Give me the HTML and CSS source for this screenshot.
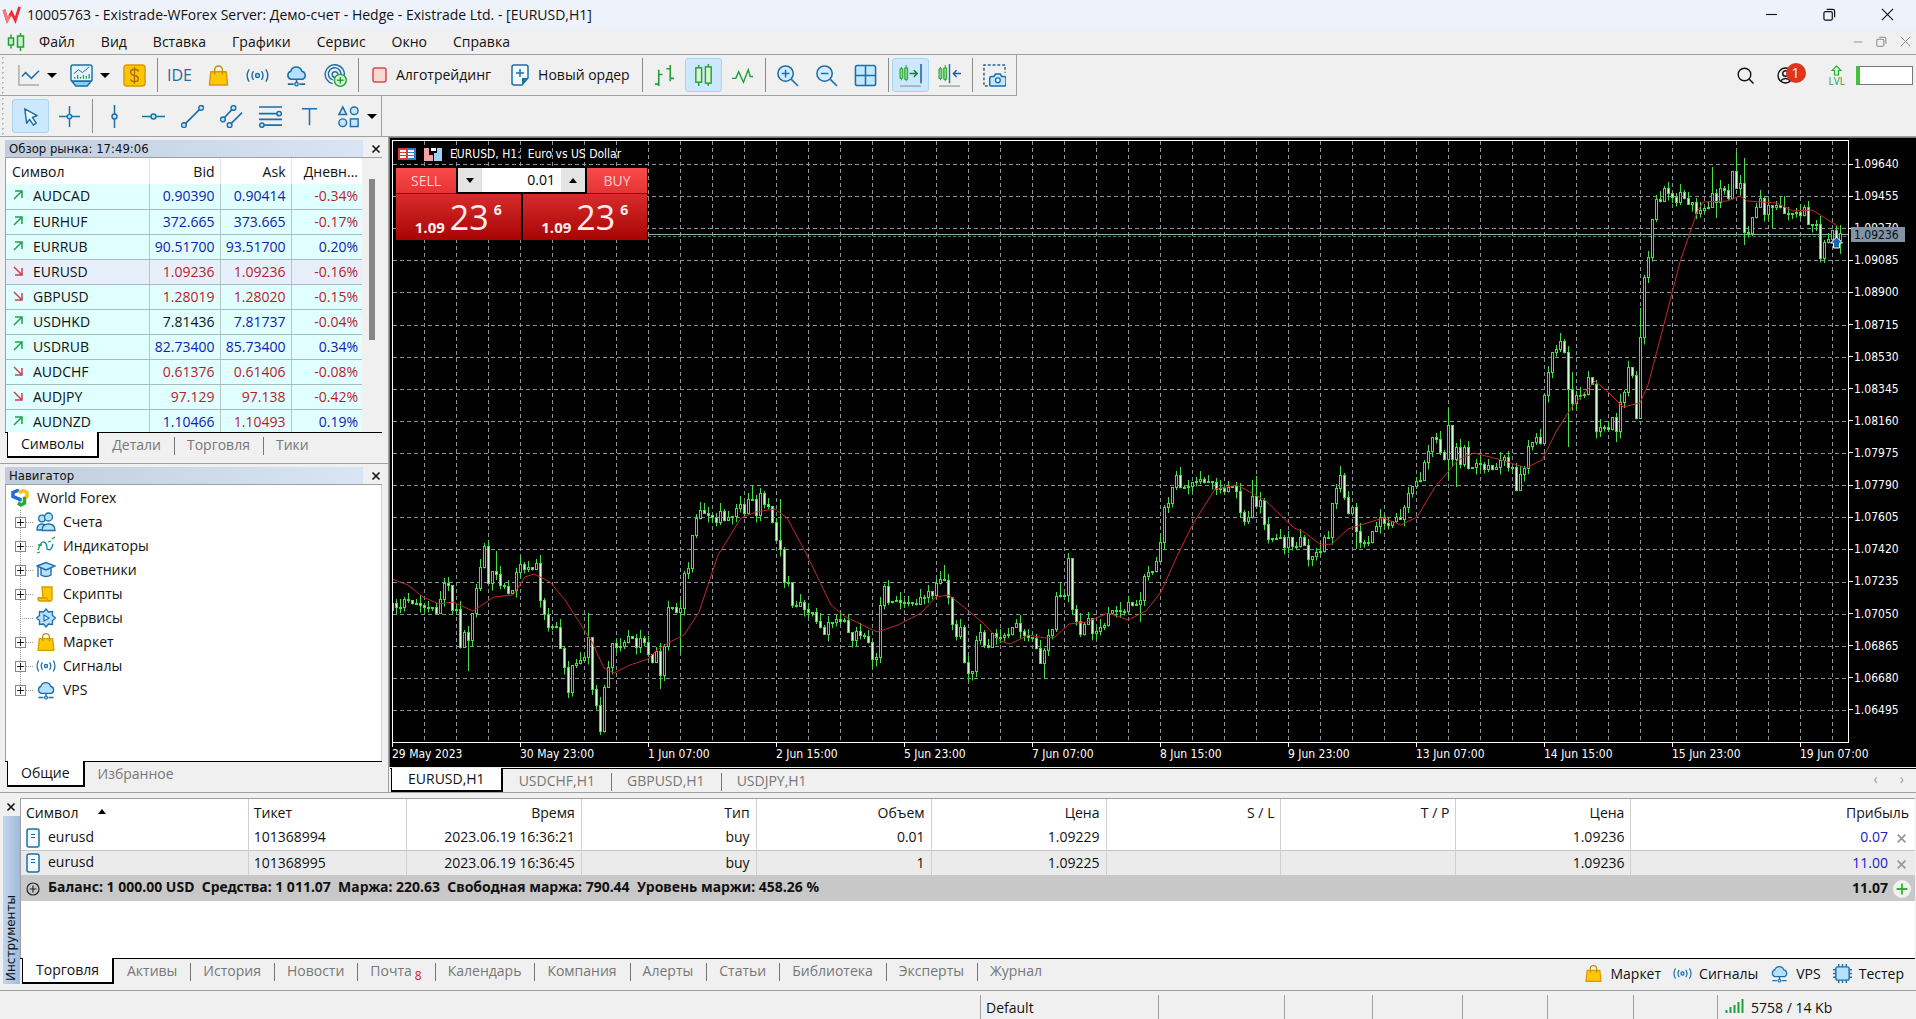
FILE: index.html
```html
<!DOCTYPE html>
<html lang="ru">
<head>
    <meta charset="UTF-8">
    <meta name="viewport" content="width=device-width, initial-scale=1.0">
    <title>10005763 - Existrade-WForex Server: Демо-счет - Hedge - Existrade Ltd. - [EURUSD,H1]</title>
    <link rel="stylesheet" href="styles.css">
</head>
<body>

    <!-- общие иконки -->
    <svg class="sprite" aria-hidden="true">
        <symbol id="i-bag" viewBox="0 0 24 24">
            <path d="M4 8h16l1.5 14h-19z" fill="#ffc800" stroke="#d99a00" stroke-width="1.5" stroke-linejoin="round"/>
            <path d="M8 11V6a4 4 0 0 1 8 0v5" fill="none" stroke="#c98e00" stroke-width="1.5"/>
        </symbol>
        <symbol id="i-signal" viewBox="0 0 24 24">
            <g fill="none" stroke="#1e6ea7" stroke-width="1.5" stroke-linecap="round">
                <circle cx="12" cy="12" r="2" fill="#bfe4ff"/>
                <path d="M7.5 8q-2.500 4 0 8M16.500 8q2.500 4 0 8M3 6q-3.500 6 0 12M21 6q3.500 6 0 12"/>
            </g>
        </symbol>
        <symbol id="i-cloud" viewBox="0 0 24 24">
            <path d="M6 16a4.500 4.500 0 0 1 0-8.500 6 6 0 0 1 11.500 0A4.500 4.500 0 0 1 18.500 16z" fill="#b5e0ff" stroke="#1e6ea7" stroke-width="1.6"/>
            <path d="M12 16v4M3 21h6M15 21h6" stroke="#1e6ea7" stroke-width="1.6"/>
            <circle cx="12" cy="21" r="1.8" fill="#b5e0ff" stroke="#1e6ea7" stroke-width="1.3"/>
        </symbol>
        <symbol id="i-doc" viewBox="0 0 14 20">
            <rect x="1" y="1" width="12" height="18" rx="2" fill="#f4faff" stroke="#1e6ea7" stroke-width="1.5"/>
            <path d="M5 6.500h4M5 9.500h4" stroke="#1e6ea7"/>
        </symbol>
        <symbol id="i-up" viewBox="0 0 12 12">
            <path d="M2 10L10 2M3 2h7v7" fill="none" stroke="#1fa04b" stroke-width="1.5"/>
        </symbol>
        <symbol id="i-down" viewBox="0 0 12 12">
            <path d="M2 2L10 10M10 3v7H3" fill="none" stroke="#c8404f" stroke-width="1.5"/>
        </symbol>
        <symbol id="i-close" viewBox="0 0 10 10">
            <path d="M1.5 1.5l7 7M8.5 1.5l-7 7" fill="none" stroke="currentColor" stroke-width="1.6"/>
        </symbol>
        <symbol id="i-restore" viewBox="0 0 14 14">
            <rect x="1" y="4" width="9" height="9" rx="1.5" fill="none" stroke="currentColor" stroke-width="1.3"/>
            <path d="M4 1.5h6.5a2 2 0 0 1 2 2V10" fill="none" stroke="currentColor" stroke-width="1.3"/>
        </symbol>
        <symbol id="i-min" viewBox="0 0 14 14">
            <path d="M1 7h12" stroke="currentColor" stroke-width="1.2"/>
        </symbol>
        <symbol id="i-x" viewBox="0 0 14 14">
            <path d="M1 1l12 12M13 1L1 13" stroke="currentColor" stroke-width="1.2"/>
        </symbol>
    </svg>

    <header class="titlebar">
        <svg class="app-logo" viewBox="0 0 20 20"><path d="M2 5l3.500 11L10 8l4 8 4.500-14" fill="none" stroke="#e8303a" stroke-width="3"/><path d="M2 5l3.500 11L8 11" fill="none" stroke="#f47a7a" stroke-width="3"/></svg>
        <h1>10005763 - Existrade-WForex Server: Демо-счет - Hedge - Existrade Ltd. - [EURUSD,H1]</h1>
        <div class="window-controls">
            <button aria-label="Свернуть"><svg width="13" height="13"><use href="#i-min"/></svg></button>
            <button aria-label="Восстановить"><svg width="13" height="13"><use href="#i-restore"/></svg></button>
            <button aria-label="Закрыть"><svg width="13" height="13"><use href="#i-x"/></svg></button>
        </div>
    </header>

    <nav class="menubar">
        <svg class="menu-logo" viewBox="0 0 18 18"><g fill="#c9f2c9" stroke="#21a038" stroke-width="1.5"><path d="M4 1.5v14M13.5 0v18"/><rect x="1.5" y="5" width="5" height="7"/><rect x="10.5" y="3" width="6" height="11"/></g></svg>
        <button>Файл</button><button>Вид</button><button>Вставка</button><button>Графики</button><button>Сервис</button><button>Окно</button><button>Справка</button>
        <div class="mdi-controls">
            <button aria-label="Свернуть график"><svg width="10" height="10"><use href="#i-min"/></svg></button>
            <button aria-label="Восстановить график"><svg width="11" height="11"><use href="#i-restore"/></svg></button>
            <button aria-label="Закрыть график"><svg width="11" height="11"><use href="#i-x"/></svg></button>
        </div>
    </nav>

    <div class="toolbar-row">
        <div class="toolbar">
            <button class="tool" aria-label="Тип графика"><svg viewBox="0 0 24 24"><path d="M2 1v21h21" fill="none" stroke="#aaa" stroke-width="1.5"/><path d="M5 13l4-4 6 6 8-8" fill="none" stroke="#1e6ea7" stroke-width="1.5"/></svg></button>
            <span class="caret"></span>
            <button class="tool" aria-label="Шаблоны"><svg viewBox="0 0 24 24"><rect x="1" y="1" width="22" height="17" rx="2" fill="#e6f4ff" stroke="#1e6ea7" stroke-width="1.5"/><path d="M2 18l4 5h12l4-5z" fill="#8ccbf5" stroke="#1e6ea7" stroke-width="1.5"/><path d="M4 10l5-4 4 3 7-6" fill="none" stroke="#1e6ea7"/><path d="M5 15.5v-2M8 15.5v-4M11 15.5v-2M14 15.5v-4M17 15.5v-3M20 15.5v-5" stroke="#21a038" stroke-width="1.3"/></svg></button>
            <span class="caret"></span>
            <button class="tool" aria-label="Символы"><svg viewBox="0 0 24 24"><rect x="1" y="1" width="22" height="22" rx="3" fill="#ffc400" stroke="#d99a00" stroke-width="1.5"/><path d="M16 8q0-2.500-4-2.500T8 8.500t4 3.500 4 3.500-4 3T8 16M12 3.500v17" fill="none" stroke="#a86e00" stroke-width="1.4"/></svg></button>
            <span class="sep"></span>
            <button class="tool ide">IDE</button>
            <button class="tool" aria-label="Маркет"><svg><use href="#i-bag"/></svg></button>
            <button class="tool" aria-label="Сигналы"><svg><use href="#i-signal"/></svg></button>
            <button class="tool" aria-label="VPS"><svg><use href="#i-cloud"/></svg></button>
            <button class="tool" aria-label="Подписка"><svg viewBox="0 0 24 24"><g fill="none" stroke="#1e6ea7" stroke-width="1.5"><path d="M9 20.500A10 10 0 1 1 21 13M9 16.500a6.500 6.500 0 1 1 8.500-5"/><circle cx="11.5" cy="11" r="3"/></g><circle cx="17" cy="17" r="6.2" fill="#d9f8d4" stroke="#21a038" stroke-width="1.5"/><path d="M17 13.5v7M13.5 17h7" stroke="#21a038" stroke-width="1.5"/></svg></button>
            <span class="sep"></span>
            <button class="tool-text"><svg width="15" height="16" viewBox="0 0 15 16"><rect x="1" y="1" width="13" height="14" rx="2" fill="#fbd9cf" stroke="#d6494f" stroke-width="1.5"/></svg>Алготрейдинг</button>
            <button class="tool-text"><svg width="18" height="22" viewBox="0 0 18 22"><path d="M3 1h12q2 0 2 2v11l-6 7H3q-2 0-2-2V3q0-2 2-2z" fill="#f2f9ff" stroke="#1e6ea7" stroke-width="1.5"/><path d="M17 14h-6v7z" fill="#1e6ea7"/><path d="M9 5v8M5 9h8" stroke="#1e6ea7" stroke-width="1.5"/></svg>Новый ордер</button>
            <span class="sep"></span>
            <button class="tool" aria-label="Бары"><svg viewBox="0 0 24 24"><path d="M6 6v17M2 21h4M6 11h4M18 1v17M14 5h4M18 15h4" fill="none" stroke="#21a038" stroke-width="1.7"/></svg></button>
            <button class="tool active" aria-label="Свечи"><svg viewBox="0 0 24 24"><g fill="#d8fbd0" stroke="#21a038" stroke-width="1.5"><path d="M7 1v22M17 0v23"/><rect x="4" y="4" width="6" height="15"/><rect x="14" y="3" width="6" height="17"/></g></svg></button>
            <button class="tool" aria-label="Линия"><svg viewBox="0 0 24 24"><path d="M1 15h4l3-7 5 11 5-13 2 7h3" fill="none" stroke="#21a038" stroke-width="1.5"/></svg></button>
            <span class="sep"></span>
            <button class="tool" aria-label="Увеличить"><svg viewBox="0 0 24 24"><circle cx="10" cy="10" r="8" fill="#d3edff" stroke="#1e6ea7" stroke-width="1.6"/><path d="M16 16l7 7M6 10h8M10 6v8" stroke="#1e6ea7" stroke-width="1.6"/></svg></button>
            <button class="tool" aria-label="Уменьшить"><svg viewBox="0 0 24 24"><circle cx="10" cy="10" r="8" fill="#d3edff" stroke="#1e6ea7" stroke-width="1.6"/><path d="M16 16l7 7M6 10h8" stroke="#1e6ea7" stroke-width="1.6"/></svg></button>
            <button class="tool" aria-label="Окна плиткой"><svg viewBox="0 0 24 24"><rect x="1.5" y="1.5" width="21" height="21" rx="2" fill="#c5e8ff" stroke="#1e6ea7" stroke-width="1.6"/><path d="M12 2v20M2 12h20" stroke="#1e6ea7" stroke-width="1.6"/></svg></button>
            <span class="sep"></span>
            <button class="tool active" aria-label="Автопрокрутка"><svg viewBox="0 0 24 24"><path d="M2.500 3v14M7.500 1v17" stroke="#21a038"/><path d="M1 5h3v10H1zM6 4h3v12H6z" fill="#7fdc78" stroke="#21a038"/><path d="M11 10h8M15.500 6.500L19 10l-3.500 3.500" fill="none" stroke="#1a7a3a" stroke-width="1.5"/><path d="M23 0v20" stroke="#1e5ea7" stroke-width="1.6"/><path d="M1 23h22" stroke="#999" stroke-width="1.3"/></svg></button>
            <button class="tool" aria-label="Сдвиг графика"><svg viewBox="0 0 24 24"><path d="M2.500 3v14M7.500 1v17" stroke="#21a038"/><path d="M1 5h3v10H1zM6 4h3v12H6z" fill="#7fdc78" stroke="#21a038"/><path d="M12 0v20" stroke="#1e6ea7" stroke-width="1.5"/><path d="M24 10h-8M19.500 6.500L16 10l3.500 3.500" fill="none" stroke="#1e5ea7" stroke-width="1.5"/><path d="M1 23h22" stroke="#999" stroke-width="1.3"/></svg></button>
            <span class="sep"></span>
            <button class="tool" aria-label="Снимок"><svg viewBox="0 0 24 24"><path d="M5 23H1V1h22v8" fill="none" stroke="#27628d" stroke-width="1.5" stroke-dasharray="3 2"/><path d="M9 13h2.500l1.500-2.500h5l1.500 2.500H22q2 0 2 2v6q0 2-2 2H9q-2 0-2-2v-6q0-2 2-2z" fill="#c5e8ff" stroke="#1e6ea7" stroke-width="1.6"/><circle cx="15.5" cy="17" r="2.5" fill="#fff" stroke="#1e6ea7" stroke-width="1.5"/></svg></button>
        </div>
        <div class="account-tools">
            <button aria-label="Поиск"><svg width="17" height="17" viewBox="0 0 17 17"><circle cx="7.5" cy="7.5" r="6.3" fill="none" stroke="#111" stroke-width="1.4"/><path d="M12 12l4.500 4.500" stroke="#111" stroke-width="1.5"/></svg></button>
            <button class="user" aria-label="Профиль"><svg width="17" height="17" viewBox="0 0 17 17"><g fill="none" stroke="#111" stroke-width="1.4"><circle cx="8.5" cy="8.5" r="7.5"/><circle cx="8.5" cy="6.5" r="2.8"/><path d="M3.500 14q5-5 10 0"/></g></svg><span class="user-badge">1</span></button>
            <div class="level"><svg width="11" height="11" viewBox="0 0 11 11"><path d="M5.500 1l4.500 4.500H7.500V10h-4V5.500H1z" fill="#d8fbd0" stroke="#21b038" stroke-width="1.2"/></svg><span>LVL</span></div>
            <div class="level-bar"></div>
        </div>
    </div>

    <div class="toolbar-row objects-row">
        <div class="toolbar">
            <button class="tool active" aria-label="Курсор"><svg viewBox="0 0 24 24"><path d="M6 4l13 7-5 2 4 6-3 2-4-6-3 4z" fill="#eaf6ff" stroke="#1e6ea7" stroke-width="1.5" stroke-linejoin="round"/></svg></button>
            <button class="tool" aria-label="Перекрестие"><svg viewBox="0 0 24 24"><path d="M12 1v22M1 12h22" stroke="#1e6ea7" stroke-width="1.5"/><circle cx="12" cy="12" r="2.3" fill="#c5e8ff" stroke="#1e6ea7" stroke-width="1.4"/></svg></button>
            <span class="sep"></span>
            <button class="tool" aria-label="Вертикальная линия"><svg viewBox="0 0 24 24"><path d="M12 0v24" stroke="#1e6ea7" stroke-width="1.6"/><circle cx="12" cy="12" r="2.6" fill="#c5e8ff" stroke="#1e6ea7" stroke-width="1.5"/></svg></button>
            <button class="tool" aria-label="Горизонтальная линия"><svg viewBox="0 0 24 24"><path d="M0 12h24" stroke="#1e6ea7" stroke-width="1.6"/><circle cx="12" cy="12" r="2.6" fill="#c5e8ff" stroke="#1e6ea7" stroke-width="1.5"/></svg></button>
            <button class="tool" aria-label="Трендовая линия"><svg viewBox="0 0 24 24"><path d="M3 21L21 3" stroke="#1e6ea7" stroke-width="1.6"/><g fill="#c5e8ff" stroke="#1e6ea7" stroke-width="1.5"><circle cx="3" cy="21" r="2.5"/><circle cx="21" cy="3" r="2.5"/></g></svg></button>
            <button class="tool" aria-label="Канал"><svg viewBox="0 0 24 24"><path d="M3 15L14 3M10 21L23 8" stroke="#1e6ea7" stroke-width="1.6"/><g fill="#c5e8ff" stroke="#1e6ea7" stroke-width="1.5"><circle cx="3" cy="15" r="2.5"/><circle cx="14" cy="3" r="2.5"/><circle cx="10" cy="21" r="2.5"/></g></svg></button>
            <button class="tool" aria-label="Фибоначчи"><svg viewBox="0 0 24 24"><path d="M0 2h24M0 9h24M0 15h24M0 21h24" stroke="#1e6ea7" stroke-width="1.6"/><g fill="#c5e8ff" stroke="#1e6ea7" stroke-width="1.5"><circle cx="21" cy="9" r="2.3"/><circle cx="3" cy="21" r="2.3"/></g></svg></button>
            <button class="tool" aria-label="Текст"><svg viewBox="0 0 24 24"><path d="M4 4h16M12 4v17" stroke="#1e6ea7" stroke-width="1.6"/></svg></button>
            <button class="tool" aria-label="Фигуры"><svg viewBox="0 0 24 24"><g fill="#c5e8ff" stroke="#1e6ea7" stroke-width="1.5"><path d="M6 2l4 8H2z"/><circle cx="18" cy="6" r="4"/><circle cx="6" cy="18.5" r="4"/><rect x="14" y="14.5" width="8" height="8"/></g></svg></button>
            <span class="caret"></span>
        </div>
    </div>

    <main class="workspace">
        <aside class="sidebar">
            <section class="panel market-panel">
                <div class="panel-title"><h2>Обзор рынка: 17:49:06</h2><button aria-label="Закрыть обзор рынка"><svg width="10" height="10"><use href="#i-close"/></svg></button></div>
                <div class="market-view">
                    <table class="market">
                        <colgroup><col><col class="col-price"><col class="col-price"><col class="col-price"></colgroup>
                        <thead><tr><th>Символ</th><th>Bid</th><th>Ask</th><th>Дневн...</th></tr></thead>
                        <tbody>
                            <tr><td><svg><use href="#i-up"/></svg>AUDCAD</td><td class="up">0.90390</td><td class="up">0.90414</td><td class="down">-0.34%</td></tr>
                            <tr><td><svg><use href="#i-up"/></svg>EURHUF</td><td class="up">372.665</td><td class="up">373.665</td><td class="down">-0.17%</td></tr>
                            <tr><td><svg><use href="#i-up"/></svg>EURRUB</td><td class="up">90.51700</td><td class="up">93.51700</td><td class="up">0.20%</td></tr>
                            <tr class="selected"><td><svg><use href="#i-down"/></svg>EURUSD</td><td class="down">1.09236</td><td class="down">1.09236</td><td class="down">-0.16%</td></tr>
                            <tr><td><svg><use href="#i-down"/></svg>GBPUSD</td><td class="down">1.28019</td><td class="down">1.28020</td><td class="down">-0.15%</td></tr>
                            <tr><td><svg><use href="#i-up"/></svg>USDHKD</td><td>7.81436</td><td class="up">7.81737</td><td class="down">-0.04%</td></tr>
                            <tr><td><svg><use href="#i-up"/></svg>USDRUB</td><td class="up">82.73400</td><td class="up">85.73400</td><td class="up">0.34%</td></tr>
                            <tr><td><svg><use href="#i-down"/></svg>AUDCHF</td><td class="down">0.61376</td><td class="down">0.61406</td><td class="down">-0.08%</td></tr>
                            <tr><td><svg><use href="#i-down"/></svg>AUDJPY</td><td class="down">97.129</td><td class="down">97.138</td><td class="down">-0.42%</td></tr>
                            <tr><td><svg><use href="#i-up"/></svg>AUDNZD</td><td class="up">1.10466</td><td class="down">1.10493</td><td class="up">0.19%</td></tr>
                        </tbody>
                    </table>
                    <div class="scroll"><div class="scroll-thumb"></div></div>
                </div>
                <div class="tabs"><button class="tab current">Символы</button><button class="tab">Детали</button><button class="tab">Торговля</button><button class="tab">Тики</button></div>
            </section>

            <section class="panel navigator-panel">
                <div class="panel-title"><h2>Навигатор</h2><button aria-label="Закрыть навигатор"><svg width="10" height="10"><use href="#i-close"/></svg></button></div>
                <div class="tree-view">
                    <div class="tree-root"><svg width="18" height="18" viewBox="0 0 18 18"><path d="M8 1L2 3.500v4l7 3v2" fill="none" stroke="#1f6fd0" stroke-width="3.5"/><path d="M8 4l4-2.500L16 3.500v4l-3 1.500" fill="none" stroke="#f2c21a" stroke-width="3.5"/><path d="M13.500 8v6L10 16 7 14" fill="none" stroke="#2aa83c" stroke-width="3.5"/></svg>World Forex</div>
                    <ul class="tree">
                        <li><i class="plus"></i><svg viewBox="0 0 20 20"><g fill="#b5e0ff" stroke="#1e6ea7" stroke-width="1.3"><circle cx="6" cy="6.5" r="3.3"/><path d="M1 18q0-6 5-6t5 6z"/><circle cx="12.5" cy="5" r="4"/><path d="M6 18.500q0-6.500 6.500-6.500t6.500 6.500z"/></g></svg>Счета</li>
                        <li><i class="plus"></i><svg viewBox="0 0 20 20"><path d="M2 14q3-9 6-8t3 7q4 3 6-5" fill="none" stroke="#1e8e9a" stroke-width="1.4"/><path d="M2 9h4M12 6l3-1M16 3l3-2M1 17l3-1" stroke="#21a038" stroke-width="1.3"/></svg>Индикаторы</li>
                        <li><i class="plus"></i><svg viewBox="0 0 20 20"><g fill="#b5e0ff" stroke="#1e6ea7" stroke-width="1.4"><path d="M5 8v7q5 3 10 0V8"/><path d="M1 6l9-3.500L19 6l-9 4z"/><path d="M2 7v10"/></g></svg>Советники</li>
                        <li><i class="plus"></i><svg viewBox="0 0 20 20"><path d="M6 3h10v12q0 2-2 2H4q-2 0-2-3h5z" fill="#ffc800" stroke="#d99a00" stroke-width="1.4"/><path d="M2 14h9q0 3 3 3" fill="none" stroke="#d99a00" stroke-width="1.3"/></svg>Скрипты</li>
                        <li><svg viewBox="0 0 20 20"><path d="M10 1l2.500 3 4-.5v4l3 2.500-3 2.500v4l-4-.5-2.500 3-2.500-3-4 .5v-4L.5 10l3-2.500v-4l4 .5z" fill="#b5e0ff" stroke="#1e6ea7" stroke-width="1.3"/><path d="M8 7l5 3-5 3z" fill="#fff" stroke="#1e6ea7" stroke-width="1.2"/></svg>Сервисы</li>
                        <li><i class="plus"></i><svg><use href="#i-bag"/></svg>Маркет</li>
                        <li><i class="plus"></i><svg><use href="#i-signal"/></svg>Сигналы</li>
                        <li><i class="plus"></i><svg><use href="#i-cloud"/></svg>VPS</li>
                    </ul>
                </div>
                <div class="tabs"><button class="tab current">Общие</button><button class="tab">Избранное</button></div>
            </section>
        </aside>

        <section class="chart-window">
            <div class="chart">
                <div class="plot">
                    <svg id="plot" viewBox="0 0 1457 603" preserveAspectRatio="none"></svg>
                    <div class="chart-overlay">
                        <div class="chart-caption">
                            <svg width="18" height="12" viewBox="0 0 18 12"><path d="M0 0h9v12H0z" fill="#d83a3a"/><path d="M9 0h9v12H9z" fill="#2a7fc8"/><path d="M2 2h6v2H2zM2 5h6v2H2zM2 8h6v2H2zM10 2h6v2h-6zM10 5h6v2h-6zM10 8h6v2h-6z" fill="#fff"/></svg>
                            <svg width="18" height="13" viewBox="0 0 18 13"><path d="M0 0h5v7h4v6H0z" fill="#f4a3a3"/><path d="M18 0h-5v5h-3v8h8z" fill="#9fd2f7"/><path d="M7 0h5v3H7z" fill="#fff"/></svg>
                            <span>EURUSD, H1:&nbsp; Euro vs US Dollar</span>
                        </div>
                        <div class="one-click">
                            <div class="one-click-head">
                                <button class="deal">SELL</button>
                                <div class="volume"><button class="spin" aria-label="Меньше"><i class="caret"></i></button><input type="text" value="0.01" aria-label="Объем"><button class="spin" aria-label="Больше"><i class="caret caret-up"></i></button></div>
                                <button class="deal">BUY</button>
                            </div>
                            <div class="one-click-prices">
                                <button class="quote"><span>1.09</span><b>23</b><sup>6</sup></button>
                                <button class="quote"><span>1.09</span><b>23</b><sup>6</sup></button>
                            </div>
                        </div>
                    </div>
                </div>
                <div class="price-axis" id="prices"><span class="price-now">1.09236</span></div>
                <div class="time-axis"><span>29 May 2023</span><span>30 May 23:00</span><span>1 Jun 07:00</span><span>2 Jun 15:00</span><span>5 Jun 23:00</span><span>7 Jun 07:00</span><span>8 Jun 15:00</span><span>9 Jun 23:00</span><span>13 Jun 07:00</span><span>14 Jun 15:00</span><span>15 Jun 23:00</span><span>19 Jun 07:00</span></div>
            </div>
            <div class="tabs chart-tabs"><button class="tab current">EURUSD,H1</button><button class="tab">USDCHF,H1</button><button class="tab">GBPUSD,H1</button><button class="tab">USDJPY,H1</button><div class="tab-arrows"><span>‹</span><span>›</span></div></div>
        </section>
    </main>

    <section class="terminal">
        <div class="terminal-side"><button aria-label="Закрыть инструменты"><svg width="10" height="10"><use href="#i-close"/></svg></button><h2>Инструменты</h2></div>
        <div class="terminal-body">
            <div class="terminal-view">
                <table class="trades">
                    <colgroup><col class="c-symbol"><col class="c-ticket"><col><col><col><col><col><col><col><col class="c-profit"></colgroup>
                    <thead><tr><th>Символ <i class="caret caret-up"></i></th><th>Тикет</th><th>Время</th><th>Тип</th><th>Объем</th><th>Цена</th><th>S / L</th><th>T / P</th><th>Цена</th><th>Прибыль</th></tr></thead>
                    <tbody>
                        <tr><td><svg><use href="#i-doc"/></svg>eurusd</td><td>101368994</td><td>2023.06.19 16:36:21</td><td>buy</td><td>0.01</td><td>1.09229</td><td></td><td></td><td>1.09236</td><td class="profit">0.07<button aria-label="Закрыть позицию"><svg><use href="#i-close"/></svg></button></td></tr>
                        <tr><td><svg><use href="#i-doc"/></svg>eurusd</td><td>101368995</td><td>2023.06.19 16:36:45</td><td>buy</td><td>1</td><td>1.09225</td><td></td><td></td><td>1.09236</td><td class="profit">11.00<button aria-label="Закрыть позицию"><svg><use href="#i-close"/></svg></button></td></tr>
                    </tbody>
                    <tfoot>
                        <tr><td colspan="9"><svg viewBox="0 0 14 14"><circle cx="7" cy="7" r="6" fill="none" stroke="#222" stroke-width="1.2"/><path d="M7 3.500v7M3.500 7h7" stroke="#222" stroke-width="1.2"/></svg>Баланс: 1 000.00 USD&nbsp; Средства: 1 011.07&nbsp; Маржа: 220.63&nbsp; Свободная маржа: 790.44&nbsp; Уровень маржи: 458.26 %</td><td class="total">11.07<button class="add" aria-label="Новый ордер"><svg viewBox="0 0 20 20"><circle cx="10" cy="10" r="10" fill="#f2f2f2"/><path d="M10 4v12M4 10h12" stroke="#35b035" stroke-width="2"/></svg></button></td></tr>
                    </tfoot>
                </table>
            </div>
            <div class="tabs">
                <button class="tab current">Торговля</button><button class="tab">Активы</button><button class="tab">История</button><button class="tab">Новости</button><button class="tab">Почта<sub>8</sub></button><button class="tab">Календарь</button><button class="tab">Компания</button><button class="tab">Алерты</button><button class="tab">Статьи</button><button class="tab">Библиотека</button><button class="tab">Эксперты</button><button class="tab">Журнал</button>
                <div class="services">
                    <button><svg><use href="#i-bag"/></svg>Маркет</button>
                    <button><svg><use href="#i-signal"/></svg>Сигналы</button>
                    <button><svg><use href="#i-cloud"/></svg>VPS</button>
                    <button><svg viewBox="0 0 20 20"><rect x="3" y="3" width="14" height="14" rx="2" fill="#b5e0ff" stroke="#1e6ea7" stroke-width="1.5"/><path d="M6 0v3M10 0v3M14 0v3M6 17v3M10 17v3M14 17v3M0 6h3M0 10h3M0 14h3M17 6h3M17 10h3M17 14h3" stroke="#1e6ea7" stroke-width="1.5"/></svg>Тестер</button>
                </div>
            </div>
        </div>
    </section>

    <footer class="statusbar">
        <div></div><div>Default</div><div></div><div></div><div></div><div></div><div></div><div></div>
        <div class="traffic"><svg width="19" height="15" viewBox="0 0 19 15"><path d="M1.5 15v-3M5.5 15v-6M9.5 15V7M13.5 15V4M17.5 15V1" stroke="#21a038" stroke-width="2"/></svg>5758 / 14 Kb</div>
    </footer>

    <script src="chart.js"></script>
</body>
</html>
```
FILE: styles.css
```css
* {
    box-sizing: border-box;
}
body {
    display: flex;
    flex-direction: column;
    min-height: 100vh;
    margin: 0;
    background-color: #f0f0f0;
    color: #111;
    font-family: 'Open Sans', 'Noto Sans', sans-serif;
    font-size: 14px;
    line-height: 20px;
}
button {
    padding: 0;
    border: 0;
    background: none;
    color: inherit;
    font: inherit;
}
h1, h2, ul {
    margin: 0;
    padding: 0;
    font-size: inherit;
    font-weight: normal;
}
svg {
    display: block;
    flex: none;
}
.sprite {
    position: absolute;
    width: 0;
    height: 0;
}
.caret {
    flex: none;
    border: 5px solid transparent;
    border-top-color: #000;
    border-bottom: 0;
}
.caret-up {
    border-top: 0;
    border-bottom: 5px solid #000;
}

/* заголовок и меню */
.titlebar {
    display: flex;
    align-items: center;
    height: 29px;
    padding: 0 22px 0 2px;
    background-color: #eef3fb;
}
.app-logo {
    width: 19px;
    height: 19px;
    margin-right: 6px;
}
.window-controls, .mdi-controls {
    display: flex;
    align-items: center;
    margin-left: auto;
}
.window-controls {
    gap: 45px;
}
.menubar {
    display: flex;
    align-items: center;
    gap: 26px;
    height: 26px;
    padding: 0 5px 0 7px;
    border-bottom: 1px solid #a0a0a0;
}
.menu-logo {
    width: 18px;
    height: 18px;
    margin-right: -12px;
}
.mdi-controls {
    gap: 13px;
    color: #888;
}

/* панели инструментов */
.toolbar-row {
    display: flex;
    justify-content: space-between;
    height: 41px;
}
.toolbar {
    display: flex;
    align-items: center;
    gap: 2px;
    padding: 0 3px 0 10px;
    border: 1px solid #a0a0a0;
    border-width: 0 1px 1px 0;
    background: radial-gradient(circle, #bbb 1px, transparent 1px) 0 0 / 5px 5px repeat-y;
}
.objects-row {
    border-bottom: 1px solid #a0a0a0;
}
.objects-row .toolbar {
    padding: 0 0 0 12px;
    border-bottom: 0;
}
.tool {
    display: flex;
    align-items: center;
    justify-content: center;
    width: 37px;
    height: 34px;
    border: 1px solid transparent;
    border-radius: 3px;
}
.tool svg {
    width: 23px;
    height: 23px;
}
.tool.active {
    border-color: #a8d4f2;
    background-color: #cce8ff;
}
.tool + .caret {
    margin: 0 4px 0 -2px;
}
.sep {
    width: 1px;
    height: 34px;
    margin: 0 1px 0 2px;
    background-color: #8c8c8c;
}
.tool.ide {
    color: #1e6ea7;
    font-size: 16px;
}
.tool-text {
    display: flex;
    align-items: center;
    gap: 9px;
    padding: 0 8px 0 10px;
}
.account-tools {
    display: flex;
    align-items: center;
    padding: 0 3px 0 0;
}
.user {
    position: relative;
    margin: 0 35px 0 23px;
}
.user-badge {
    position: absolute;
    top: -13px;
    left: 9px;
    width: 20px;
    height: 20px;
    border-radius: 10px;
    background-color: #e0341c;
    color: #fff;
    line-height: 20px;
}
.user .user-badge {
    top: -14px;
    margin-top: 10px;
}
.level {
    display: flex;
    flex-direction: column;
    align-items: center;
    margin-right: 11px;
    color: #21a038;
    font-size: 10px;
    line-height: 10px;
}
.level-bar {
    width: 57px;
    height: 19px;
    border: 1px solid #777;
    border-left: 4px solid #3fc43f;
    background-color: #fff;
}

/* рабочая область */
.workspace {
    display: grid;
    flex: 1;
    grid-template-columns: 389px minmax(0, 1fr);
    border-bottom: 1px solid #a0a0a0;
}
.sidebar {
    display: flex;
    flex-direction: column;
    border-right: 1px solid #a0a0a0;
}
.panel {
    display: flex;
    flex-direction: column;
    padding: 3px 6px 5px 5px;
}
.market-panel {
    border-bottom: 1px solid #a0a0a0;
}
.navigator-panel {
    flex: 1;
}
.panel-title {
    display: flex;
    align-items: center;
    justify-content: space-between;
    height: 18px;
    padding-right: 1px;
    border-bottom: 1px solid #a0a0a0;
    font-family: 'DejaVu Sans Condensed', 'DejaVu Sans', sans-serif;
    font-size: 13px;
}
.panel-title h2 {
    width: 358px;
    padding-left: 4px;
    background: linear-gradient(90deg, #bfcddd, #d9e5f5);
    line-height: 17px;
}
.market-view {
    display: flex;
    height: 274px;
    overflow: hidden;
    border-left: 1px solid #a0a0a0;
}
.market {
    width: 356px;
    border-collapse: collapse;
    table-layout: fixed;
    background-color: #e0ffff;
}
.col-price {
    width: 71px;
}
.market th, .market td {
    height: 25px;
    padding: 0 5px 0 0;
    border-right: 1px solid #b9c6c6;
    border-bottom: 1px solid #a9b9b9;
    text-align: right;
    font-weight: normal;
}
.market th {
    height: 26px;
    padding-top: 1px;
    border-color: #e4e4e4;
    border-bottom: 0;
    background-color: #fff;
}
.market th:first-child, .market td:first-child {
    padding-left: 6px;
    text-align: left;
}
.market th:last-child, .market td:last-child {
    padding-right: 4px;
    border-right: 0;
}
.market td svg {
    display: inline-block;
    width: 12px;
    height: 12px;
    margin-right: 9px;
}
.market .selected {
    background-color: #e6effa;
}
.up {
    color: #1020b0;
}
.down {
    color: #b81c2c;
}
.scroll {
    flex: 1;
    padding: 21px 7px 0;
}
.scroll-thumb {
    height: 161px;
    width: 6px;
    background-color: #868686;
}

/* вкладки */
.tabs {
    display: flex;
    border-top: 1px solid #000;
    color: #777;
}
.tab {
    position: relative;
    height: 24px;
    padding: 0 13px;
}
.tab + .tab:not(.current + .tab)::before {
    content: '';
    position: absolute;
    left: 0;
    top: 4px;
    height: 18px;
    border-left: 1px solid #777;
}
.tab.current {
    height: 26px;
    margin: -1px 0 0 2px;
    border: 1px solid #000;
    border-width: 0 2px 2px 1px;
    background-color: #fff;
    color: #111;
}
.tab sub {
    margin-left: 3px;
    color: #e01020;
    font-size: 12px;
    line-height: 0;
}

/* навигатор */
.tree-view {
    flex: 1;
    padding: 1px 5px;
    border: 1px solid #d0d0d0;
    border-width: 0 1px;
    border-left-color: #a0a0a0;
    background-color: #fff;
}
.tree-root {
    display: flex;
    align-items: center;
    gap: 8px;
    height: 24px;
}
.tree {
    height: 180px;
    margin-left: 9px;
    list-style: none;
    background: repeating-linear-gradient(#999 0 1px, transparent 1px 2px) 0 0 / 1px 100% no-repeat;
}
.tree li {
    position: relative;
    display: flex;
    align-items: center;
    height: 24px;
    padding-left: 16px;
    background: repeating-linear-gradient(90deg, #999 0 1px, transparent 1px 2px) 0 12px / 14px 1px no-repeat;
}
.tree li svg {
    width: 20px;
    height: 20px;
    margin-right: 7px;
}
/* квадратик раскрытия лежит поверх линии дерева */
.plus {
    position: absolute;
    left: -5px;
    top: 7px;
    width: 11px;
    height: 11px;
    border: 1px solid #888;
    background: linear-gradient(#222, #222) center / 7px 1px no-repeat, linear-gradient(#222, #222) center / 1px 7px no-repeat, #fff;
}

/* график */
.chart-window {
    display: flex;
    flex-direction: column;
}
.chart {
    display: grid;
    flex: 1;
    grid-template-columns: minmax(0, 1fr) 67px;
    grid-template-rows: minmax(0, 1fr) 24px;
    padding: 2px 0 0 2px;
    border: 1px solid #777;
    border-width: 1px 0 0 1px;
    background-color: #000;
    color: #fff;
    font-family: 'DejaVu Sans Condensed', 'DejaVu Sans', sans-serif;
    font-size: 12px;
    line-height: 16px;
}
.plot {
    position: relative;
}
#plot {
    position: absolute;
    width: 100%;
    height: 100%;
}
.grid-line {
    stroke: #8a929a;
    stroke-dasharray: 4 3;
}
.frame {
    fill: none;
    stroke: #fff;
}
.candles {
    stroke: #45e045;
}
.bull {
    fill: #000;
}
.bear {
    fill: #d0ffd0;
}
.average {
    fill: none;
    stroke: #c22a2a;
}
.bid-line {
    stroke: #a0a8b0;
}
.ask-line {
    stroke: #3c8a4c;
    stroke-dasharray: 3 2;
}
.trade-arrow {
    fill: #1766b5;
    stroke: #fff;
}
.chart-overlay {
    position: relative;
    width: 255px;
    padding: 4px 0 0 4px;
}
.chart-caption {
    display: flex;
    align-items: center;
    gap: 8px;
    height: 20px;
    margin-bottom: 4px;
    padding-left: 2px;
    white-space: nowrap;
}
.one-click {
    width: 251px;
    background-color: #000;
    font-family: 'Open Sans', 'Noto Sans', sans-serif;
    font-size: 14px;
}
.one-click-head {
    display: flex;
    justify-content: space-between;
    height: 26px;
}
.deal {
    width: 60px;
    border-bottom: 1px solid #7d0f0f;
    background: linear-gradient(#fb4a4a, #e43434);
    color: #ffd0d0;
}
.volume {
    display: flex;
    width: 127px;
    height: 24px;
}
.spin {
    display: flex;
    align-items: center;
    justify-content: center;
    width: 24px;
    background-color: #e4e4e4;
}
.spin .caret {
    border-left-width: 4px;
    border-right-width: 4px;
}
.volume input {
    flex: 1;
    min-width: 0;
    padding: 0 6px;
    border: 0;
    font: inherit;
    text-align: right;
}
.one-click-prices {
    display: flex;
    gap: 2px;
}
.quote {
    display: flex;
    flex: 1;
    align-items: flex-end;
    justify-content: center;
    gap: 5px;
    height: 46px;
    padding-bottom: 5px;
    background: linear-gradient(#d82c2c, #a80404);
    color: #ffecec;
    font-size: 15px;
    font-weight: bold;
}
.quote b {
    font-size: 34px;
    font-weight: normal;
    line-height: 36px;
}
.quote sup {
    align-self: flex-start;
    padding-top: 6px;
    font-size: 14px;
    line-height: 20px;
    vertical-align: baseline;
}
.price-axis {
    position: relative;
    display: flex;
    flex-direction: column;
    justify-content: space-between;
    padding: 16px 0 25px;
}
.price-axis span {
    display: flex;
    align-items: center;
    gap: 1px;
}
.price-axis span::before {
    content: '';
    width: 4px;
    height: 1px;
    background-color: #fff;
}
/* текущая цена закрывает подпись шкалы */
.price-axis .price-now {
    position: absolute;
    top: 87px;
    left: 2px;
    z-index: 1;
    width: 54px;
    height: 15px;
    background-color: #8393a3;
    color: #001020;
}
.price-axis .price-now::before {
    width: 2px;
    background: none;
}
.time-axis {
    display: grid;
    grid-column: 1 / -1;
    grid-template-columns: repeat(12, 128px);
    overflow: hidden;
}
.time-axis span {
    padding-top: 3px;
    background: linear-gradient(#fff, #fff) 0 0 / 1px 4px no-repeat;
    white-space: nowrap;
}
.chart-tabs {
    height: 24px;
    margin: 1px 0 0 1px;
}
.chart-tabs .tab {
    padding: 0 16px;
}
.chart-tabs .tab.current {
    height: 24px;
    margin-left: 1px;
}
.tab-arrows {
    display: flex;
    gap: 22px;
    margin-left: auto;
    padding-right: 12px;
    color: #999;
}

/* терминал */
.terminal {
    display: flex;
    padding: 5px 1px 6px 3px;
    border-bottom: 1px solid #a0a0a0;
}
.terminal-side {
    display: flex;
    flex-direction: column;
    width: 17px;
}
.terminal-side button {
    height: 18px;
    padding-left: 3px;
}
.terminal-side h2 {
    flex: 1;
    padding-top: 3px;
    background: linear-gradient(90deg, #9fbbdc, #c0d6ee);
    font-family: 'DejaVu Sans', sans-serif;
    font-size: 12px;
    line-height: 17px;
    writing-mode: vertical-rl;
    transform: rotate(180deg);
}
.terminal-body {
    flex: 1;
    min-width: 0;
    border-top: 1px solid #a0a0a0;
}
.terminal-view {
    height: 159px;
    border-left: 1px solid #a0a0a0;
    background-color: #fff;
}
.trades {
    width: 100%;
    border-collapse: collapse;
    table-layout: fixed;
}
.c-symbol {
    width: 12%;
}
.c-ticket {
    width: 158px;
}
.c-profit {
    width: 15%;
}
.trades th, .trades td {
    height: 25px;
    padding: 0 6px 0 5px;
    border-right: 1px solid #d0d0d0;
    text-align: right;
    font-weight: normal;
    white-space: nowrap;
}
.trades th {
    height: 26px;
    padding-top: 1px;
}
.trades th:nth-child(-n+2), .trades td:nth-child(-n+2):not(.total) {
    text-align: left;
}
.trades th .caret {
    display: inline-block;
    margin: 0 0 4px 16px;
    border-left-width: 4px;
    border-right-width: 4px;
}
.trades tbody tr:nth-child(2) {
    border-top: 1px solid #c4c4c4;
    background-color: #ebebeb;
}
.trades tfoot {
    background-color: #c8c8c8;
}
.trades tfoot td {
    height: 26px;
    border: 0;
    font-family: 'Noto Sans', 'Open Sans', sans-serif;
    font-weight: bold;
}
.trades th:last-child, .trades td:last-child {
    border-right: 0;
}
.trades td svg {
    display: inline-block;
    width: 14px;
    height: 20px;
    margin-right: 8px;
    vertical-align: middle;
}
.trades td button {
    margin-left: 6px;
}
.trades td button svg {
    width: 11px;
    height: 11px;
    margin: 0 2px;
    color: #999;
}
.trades td .add {
    margin-left: 5px;
}
.trades td .add svg {
    width: 18px;
    height: 18px;
    margin: 0 -2px 0 0;
}
.trades .profit {
    color: #2020c8;
}
.services {
    display: flex;
    gap: 12px;
    margin-left: auto;
    padding-right: 11px;
    color: #111;
}
.services button {
    display: flex;
    align-items: center;
    gap: 7px;
    height: 29px;
    margin-bottom: -4px;
}
.services svg {
    width: 19px;
    height: 19px;
}

/* строка состояния */
.statusbar {
    display: grid;
    grid-template-columns: 980fr 178fr 126fr 88fr 90fr 85fr 86fr 84fr 199fr;
    height: 28px;
    padding-top: 4px;
}
.statusbar div {
    padding: 3px 5px 0;
    border-left: 1px solid #a0a0a0;
}
.statusbar div:first-child {
    border-left: 0;
}
.statusbar .traffic {
    display: flex;
    gap: 7px;
    padding-left: 7px;
    white-space: nowrap;
}
```
FILE: chart.js
```js
// Свечи H1: y закрытия в координатах графика, открытие = закрытие прошлой свечи
const closes = [
    463, 467, 467, 459, 460, 463, 463, 465, 467, 468, 467, 473, 459, 443, 445, 470, 469, 507, 492, 500,
    473, 448, 427, 406, 443, 431, 434, 445, 446, 453, 450, 432, 424, 429, 427, 429, 423, 460, 474, 487,
    486, 487, 508, 527, 552, 525, 523, 520, 517, 497, 549, 565, 591, 547, 527, 503, 507, 506, 502, 496,
    498, 507, 498, 502, 514, 522, 511, 535, 506, 467, 467, 472, 468, 433, 428, 395, 378, 370, 373, 375,
    377, 382, 371, 380, 377, 376, 368, 364, 373, 359, 359, 375, 353, 364, 366, 382, 400, 409, 442, 442,
    465, 466, 462, 469, 472, 472, 481, 487, 494, 482, 482, 479, 481, 480, 492, 500, 491, 495, 496, 502,
    519, 517, 465, 446, 462, 461, 460, 462, 462, 462, 463, 464, 457, 457, 451, 455, 443, 439, 440, 457,
    484, 496, 487, 522, 533, 531, 500, 492, 505, 507, 493, 497, 497, 495, 494, 487, 483, 491, 495, 497,
    498, 508, 523, 510, 495, 489, 456, 455, 455, 418, 469, 481, 494, 484, 478, 493, 491, 487, 485, 473,
    470, 470, 471, 471, 462, 465, 464, 460, 436, 432, 431, 421, 402, 367, 363, 347, 335, 347, 347, 346,
    342, 341, 339, 342, 341, 342, 349, 348, 351, 347, 346, 351, 372, 381, 377, 356, 366, 360, 384, 399,
    398, 398, 397, 407, 397, 406, 406, 397, 405, 419, 416, 412, 411, 397, 397, 363, 348, 335, 357, 373,
    367, 391, 402, 403, 402, 391, 386, 377, 383, 385, 381, 377, 379, 367, 353, 346, 341, 340, 322, 311,
    297, 299, 312, 319, 285, 319, 307, 324, 307, 328, 327, 323, 324, 329, 325, 329, 327, 320, 317, 327,
    327, 350, 334, 328, 306, 302, 297, 303, 255, 232, 212, 209, 201, 212, 249, 263, 255, 255, 254, 237,
    244, 291, 287, 287, 289, 277, 291, 262, 252, 227, 235, 278, 197, 137, 117, 79, 59, 61, 48, 53,
    57, 62, 52, 58, 64, 62, 73, 70, 68, 67, 53, 62, 48, 50, 58, 31, 48, 43, 92, 93,
    77, 67, 58, 74, 65, 67, 65, 67, 73, 73, 73, 72, 75, 67, 84, 85, 84, 118, 102, 99,
    90, 100, 93
];

// длинные тени: номер свечи -> y
const highs = { 13: 438, 23: 403, 26: 411, 49: 473, 78: 363, 90: 345, 92: 348, 97: 359, 138: 425, 167: 443, 169: 413, 215: 340, 216: 336, 237: 326, 264: 268, 295: 232, 312: 168, 330: 27, 336: 12, 338: 18, 348: 56 };
const lows = { 19: 531, 52: 595, 67: 549, 72: 512, 120: 528, 144: 542, 163: 538, 187: 482, 230: 426, 241: 409, 264: 339, 266: 347, 294: 307, 306: 302, 331: 78, 338: 105, 345: 88, 358: 123, 362: 114 };

const average = '0,439 16,445 31,457 47,464 61,462 81,471 102,457 121,455 133,437 142,434 158,442 173,460 200,502 212,528 222,533 238,525 256,519 265,510 276,503 292,495 307,472 326,415 349,378 364,372 383,369 395,378 414,413 439,465 452,476 485,492 506,485 529,473 544,457 557,455 590,482 608,501 618,504 637,495 653,498 663,497 677,484 695,482 716,473 736,480 754,471 769,452 786,414 801,384 823,349 845,345 873,360 902,388 912,392 929,405 940,404 956,389 991,378 1009,385 1025,377 1043,347 1066,320 1082,313 1110,320 1134,328 1150,320 1165,290 1180,267 1203,241 1216,252 1231,267 1248,263 1256,245 1271,188 1288,122 1305,72 1311,62 1335,61 1348,56 1356,61 1385,63 1401,71 1420,70 1433,78 1447,87';

let svg = '';

// сетка
for (let x = 32; x < 1456; x += 32) {
    svg += `<path class="grid-line" d="M${x + 0.5} 1V602"/>`;
}
for (let i = 0; i < 18; i++) {
    svg += `<path class="grid-line" d="M1 ${Math.round(24 + i * 32.12) + 0.5}H1456"/>`;
}

svg += '<path class="bid-line" d="M256 94.5H1456"/><path class="ask-line" d="M256 96.5H1456"/>';

// свечи
svg += '<g class="candles">';
for (let i = 0; i < closes.length; i++) {
    const open = i ? closes[i - 1] : 470;
    const top = Math.min(open, closes[i]);
    const bottom = Math.max(open, closes[i]);
    const high = highs[i] || top - (i * 7 % 5) * 2;
    const low = lows[i] || bottom + (i * 11 % 6) * 1.5;
    const x = i * 4 + 0.5;
    const kind = closes[i] > open ? 'bear' : 'bull';
    svg += `<path d="M${x} ${high}V${low}"/>`;
    svg += `<rect class="${kind}" x="${x - 1}" y="${top + 0.5}" width="2" height="${Math.max(bottom - top, 1)}"/>`;
}
svg += '</g>';

svg += `<polyline class="average" points="${average}"/>`;
svg += '<path class="trade-arrow" d="M1444.5 97l6 6h-3v5h-6v-5h-3z"/>';
svg += '<rect class="frame" x="0.5" y="0.5" width="1456" height="602"/>';
document.getElementById('plot').innerHTML = svg;

// шкала цен
const prices = document.getElementById('prices');
for (let i = 0; i < 18; i++) {
    const label = document.createElement('span');
    label.textContent = (1.0964 - i * 0.00185).toFixed(5);
    prices.appendChild(label);
}
```
